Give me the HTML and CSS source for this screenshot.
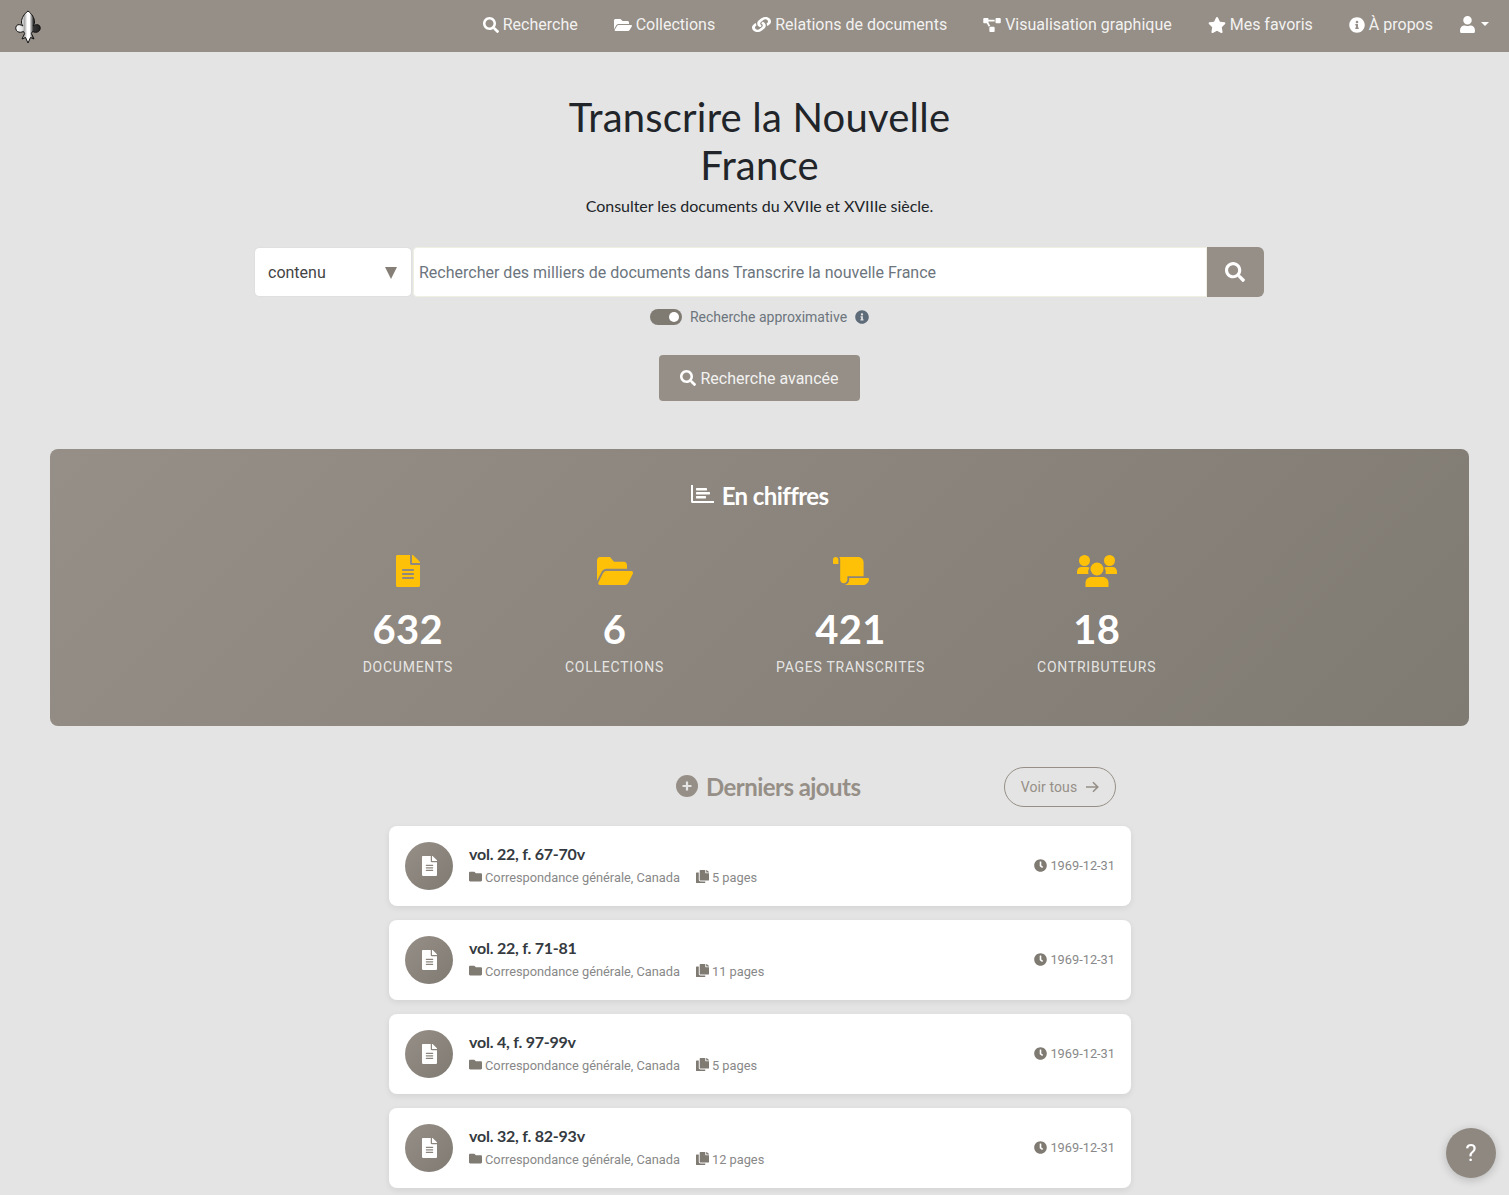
FILE: index.html
```html
<!DOCTYPE html>
<html lang="fr">
<head>
<meta charset="utf-8">
<title>Transcrire la Nouvelle France</title>
<link rel="stylesheet" href="styles.css">
</head>
<body>
<svg class="sprite" width="0" height="0" aria-hidden="true">
  <defs>
    <symbol id="i-search" viewBox="0 0 512 512"><path d="M505 442.7L405.3 343c-4.5-4.5-10.6-7-17-7H372c27.6-35.3 44-79.7 44-128C416 93.1 322.9 0 208 0S0 93.1 0 208s93.1 208 208 208c48.3 0 92.7-16.4 128-44v16.3c0 6.4 2.5 12.5 7 17l99.7 99.7c9.4 9.4 24.6 9.4 33.9 0l28.3-28.3c9.4-9.4 9.4-24.6.1-34zM208 336c-70.7 0-128-57.2-128-128 0-70.7 57.2-128 128-128 70.7 0 128 57.2 128 128 0 70.7-57.2 128-128 128z"/></symbol>
    <symbol id="i-folder-open" viewBox="0 0 576 512"><path d="M572.694 292.093L500.27 416.248A63.997 63.997 0 0 1 444.989 448H45.025c-18.523 0-30.064-20.093-20.731-36.093l72.424-124.155A64 64 0 0 1 152 256h399.964c18.523 0 30.064 20.093 20.73 36.093zM152 224h328v-48c0-26.51-21.49-48-48-48H272l-64-64H48C21.49 64 0 85.49 0 112v278.046l69.077-118.418C86.214 242.25 117.989 224 152 224z"/></symbol>
    <symbol id="i-folder-tall" viewBox="0 64 576 384" preserveAspectRatio="none"><path d="M572.694 292.093L500.27 416.248A63.997 63.997 0 0 1 444.989 448H45.025c-18.523 0-30.064-20.093-20.731-36.093l72.424-124.155A64 64 0 0 1 152 256h399.964c18.523 0 30.064 20.093 20.73 36.093zM152 224h328v-48c0-26.51-21.49-48-48-48H272l-64-64H48C21.49 64 0 85.49 0 112v278.046l69.077-118.418C86.214 242.25 117.989 224 152 224z"/></symbol>
    <symbol id="i-link" viewBox="0 0 512 512" preserveAspectRatio="none"><path d="M326.612 185.391c59.747 59.809 58.927 155.698.36 214.59-.11.12-.24.25-.36.37l-67.2 67.2c-59.27 59.27-155.699 59.262-214.96 0-59.27-59.26-59.27-155.7 0-214.96l37.106-37.106c9.84-9.84 26.786-3.3 27.294 10.606.648 17.722 3.826 35.527 9.69 52.721 1.986 5.822.567 12.262-3.783 16.612l-13.087 13.087c-28.026 28.026-28.905 73.66-1.155 101.96 28.024 28.579 74.086 28.749 102.325.51l67.2-67.19c28.191-28.191 28.073-73.757 0-101.83-3.701-3.694-7.429-6.564-10.341-8.569a16.037 16.037 0 0 1-6.947-12.606c-.396-10.567 3.348-21.456 11.698-29.806l21.054-21.055c5.521-5.521 14.182-6.199 20.584-1.731a152.482 152.482 0 0 1 20.522 17.197zM467.547 44.449c-59.261-59.262-155.69-59.27-214.96 0l-67.2 67.2c-.12.12-.25.25-.36.37-58.566 58.892-59.387 154.781.36 214.59a152.454 152.454 0 0 0 20.521 17.196c6.402 4.468 15.064 3.789 20.584-1.731l21.054-21.055c8.35-8.35 12.094-19.239 11.698-29.806a16.037 16.037 0 0 0-6.947-12.606c-2.912-2.005-6.64-4.875-10.341-8.569-28.073-28.073-28.191-73.639 0-101.83l67.2-67.19c28.239-28.239 74.3-28.069 102.325.51 27.75 28.3 26.872 73.934-1.155 101.96l-13.087 13.087c-4.35 4.35-5.769 10.79-3.783 16.612 5.864 17.194 9.042 34.999 9.69 52.721.509 13.906 17.454 20.446 27.294 10.606l37.106-37.106c59.271-59.259 59.271-155.699.001-214.959z"/></symbol>
    <symbol id="i-diagram" viewBox="0 0 640 512"><path d="M384 320H256c-17.67 0-32 14.33-32 32v128c0 17.67 14.33 32 32 32h128c17.67 0 32-14.33 32-32V352c0-17.67-14.33-32-32-32zM192 32c0-17.67-14.33-32-32-32H32C14.33 0 0 14.33 0 32v128c0 17.67 14.33 32 32 32h95.72l73.16 128.04C211.98 300.98 232.4 288 256 288h.28L192 175.51V128h224V64H192V32zM608 0H480c-17.67 0-32 14.33-32 32v128c0 17.67 14.33 32 32 32h128c17.67 0 32-14.33 32-32V32c0-17.67-14.33-32-32-32z"/></symbol>
    <symbol id="i-star" viewBox="0 0 576 512"><path d="M259.3 17.8L194 150.2 47.9 171.5c-26.2 3.8-36.7 36.1-17.7 54.6l105.7 103-25 145.5c-4.5 26.3 23.2 46 46.4 33.7L288 439.6l130.7 68.7c23.2 12.2 50.9-7.4 46.4-33.7l-25-145.5 105.7-103c19-18.5 8.5-50.8-17.7-54.6L382 150.2 316.7 17.8c-11.7-23.6-45.6-23.9-57.4 0z"/></symbol>
    <symbol id="i-info" viewBox="0 0 512 512"><path d="M256 8C119.043 8 8 119.083 8 256c0 136.997 111.043 248 248 248s248-111.003 248-248C504 119.083 392.957 8 256 8zm0 110c23.196 0 42 18.804 42 42s-18.804 42-42 42-42-18.804-42-42 18.804-42 42-42zm56 254c0 6.627-5.373 12-12 12h-88c-6.627 0-12-5.373-12-12v-24c0-6.627 5.373-12 12-12h12v-64h-12c-6.627 0-12-5.373-12-12v-24c0-6.627 5.373-12 12-12h64c6.627 0 12 5.373 12 12v100h12c6.627 0 12 5.373 12 12v24z"/></symbol>
    <symbol id="i-user" viewBox="0 0 448 512"><path d="M224 256c70.7 0 128-57.3 128-128S294.7 0 224 0 96 57.3 96 128s57.3 128 128 128zm89.6 32h-16.7c-22.2 10.2-46.9 16-72.9 16s-50.6-5.8-72.9-16h-16.7C60.2 288 0 348.2 0 422.4V464c0 26.5 21.5 48 48 48h352c26.5 0 48-21.5 48-48v-41.6c0-74.2-60.2-134.4-134.4-134.4z"/></symbol>
    <symbol id="i-file" viewBox="0 0 384 512"><path d="M224 136V0H24C10.7 0 0 10.7 0 24v464c0 13.3 10.7 24 24 24h336c13.3 0 24-10.7 24-24V160H248c-13.2 0-24-10.8-24-24zm64 236c0 6.6-5.4 12-12 12H108c-6.6 0-12-5.4-12-12v-8c0-6.6 5.4-12 12-12h168c6.6 0 12 5.4 12 12v8zm0-64c0 6.6-5.4 12-12 12H108c-6.6 0-12-5.4-12-12v-8c0-6.6 5.4-12 12-12h168c6.6 0 12 5.4 12 12v8zm0-72v8c0 6.6-5.4 12-12 12H108c-6.6 0-12-5.4-12-12v-8c0-6.6 5.4-12 12-12h168c6.6 0 12 5.4 12 12zm96-114.1v6.1H256V0h6.1c6.4 0 12.5 2.5 17 7l97.9 98c4.5 4.5 7 10.6 7 16.9z"/></symbol>
    <symbol id="i-scroll" viewBox="0 0 640 512" preserveAspectRatio="none"><path d="M48 0C21.53 0 0 21.53 0 48v64c0 8.84 7.16 16 16 16h80V48C96 21.53 74.47 0 48 0zm208 412.57V352h288V96c0-52.94-43.06-96-96-96H111.59C121.74 13.41 128 29.92 128 48v368c0 38.87 34.65 69.65 74.75 63.12C234.22 474 256 444.46 256 412.57zM288 384v32c0 52.93-43.06 96-96 96h336c61.86 0 112-50.14 112-112 0-8.84-7.16-16-16-16H288z"/></symbol>
    <symbol id="i-users" viewBox="0 0 40 32">
      <circle cx="7.5" cy="5.5" r="5.5"/><circle cx="32.5" cy="5.5" r="5.5"/><circle cx="20" cy="14" r="6.5"/>
      <path d="M0 19v-2.5C0 14 2 12 4.5 12H10c1 0 2 .3 2.7.8C11 14.5 11 17 11.5 19Z"/>
      <path d="M40 19v-2.5C40 14 38 12 35.500 12H30c-1 0-2 .3-2.700.8C29 14.500 29 17 28.500 19Z"/>
      <path d="M8.500 32v-4c0-3.500 2.500-6 6-6h11c3.500 0 6 2.500 6 6v4Z"/>
    </symbol>
    <symbol id="i-folder" viewBox="0 0 512 512"><path d="M464 128H272l-64-64H48C21.49 64 0 85.49 0 112v288c0 26.51 21.49 48 48 48h416c26.51 0 48-21.49 48-48V176c0-26.51-21.49-48-48-48z"/></symbol>
    <symbol id="i-copy" viewBox="0 0 448 512" preserveAspectRatio="none"><path d="M320 448v40c0 13.255-10.745 24-24 24H24c-13.255 0-24-10.745-24-24V120c0-13.255 10.745-24 24-24h72v296c0 30.879 25.121 56 56 56h168zm0-344V0H152c-13.255 0-24 10.745-24 24v368c0 13.255 10.745 24 24 24h272c13.255 0 24-10.745 24-24V128H344c-13.2 0-24-10.8-24-24zm120.971-31.029L375.029 7.029A24 24 0 0 0 358.059 0H352v96h96v-6.059a24 24 0 0 0-7.029-16.97z"/></symbol>
    <symbol id="i-clock" viewBox="0 0 512 512"><path d="M256,8C119,8,8,119,8,256S119,504,256,504,504,393,504,256,393,8,256,8Zm92.49,313h0l-20,25a16,16,0,0,1-22.49,2.5h0l-67-49.72a40,40,0,0,1-15-31.23V112a16,16,0,0,1,16-16h32a16,16,0,0,1,16,16V256l58,42.5A16,16,0,0,1,348.49,321Z"/></symbol>
    <linearGradient id="fleur-grad" x1="0" x2="1" y1="0" y2="0">
      <stop offset="0" stop-color="#fff"/>
      <stop offset="0.27" stop-color="#ddd"/>
      <stop offset="0.36" stop-color="#aaa"/>
      <stop offset="0.47" stop-color="#fff"/>
      <stop offset="0.56" stop-color="#fff"/>
      <stop offset="0.72" stop-color="#333"/>
      <stop offset="1" stop-color="#222"/>
    </linearGradient>
  </defs>
</svg>

<nav class="navbar">
  <a class="brand" href="#" aria-label="Accueil">
    <svg class="fleur" viewBox="0 0 26 34">
      <path d="M13 1C9 4 6.500 8 6.500 12 6.500 14 7.300 15 8 16 6 14.600 3 14 1.600 15.600 .2 17.400 .6 20.400 2.600 21.600 4.400 22.700 6.800 22.400 8.400 21.400L9.600 23.500 7 29 10.500 27.500 13 33 15.500 27.500 19 29 16.400 23.500 17.600 21.400C19.200 22.400 21.600 22.700 23.400 21.600 25.400 20.400 25.800 17.400 24.400 15.600 23 14 20 14.600 18 16 18.700 15 19.500 14 19.500 12 19.500 8 17 4 13 1Z" fill="url(#fleur-grad)" stroke="#111" stroke-width="1"/>
    </svg>
  </a>
  <ul class="nav-list">
    <li><a class="nav-link" href="#"><svg class="ico ico-search"><use href="#i-search"/></svg>Recherche</a></li>
    <li><a class="nav-link" href="#"><svg class="ico ico-open"><use href="#i-folder-open"/></svg>Collections</a></li>
    <li class="nav-rel"><a class="nav-link" href="#"><svg class="ico ico-link"><use href="#i-link"/></svg>Relations de documents</a></li>
    <li><a class="nav-link" href="#"><svg class="ico ico-diagram"><use href="#i-diagram"/></svg>Visualisation graphique</a></li>
    <li><a class="nav-link" href="#"><svg class="ico ico-star"><use href="#i-star"/></svg>Mes favoris</a></li>
    <li><a class="nav-link" href="#"><svg class="ico ico-info"><use href="#i-info"/></svg>À propos</a></li>
    <li><a class="nav-link nav-user" href="#" aria-label="Compte"><svg class="ico ico-user"><use href="#i-user"/></svg><span class="caret"></span></a></li>
  </ul>
</nav>

<main class="page">
  <section class="hero">
    <h1 class="hero-title">Transcrire la Nouvelle France</h1>
    <p class="hero-sub">Consulter les documents du XVIIe et XVIIIe siècle.</p>
    <form class="search-bar">
      <div class="select-box"><span>contenu</span><span class="select-arrow"></span></div>
      <div class="search-input">Rechercher des milliers de documents dans Transcrire la nouvelle France</div>
      <button class="search-btn" type="button" aria-label="Rechercher"><svg class="ico-search-lg"><use href="#i-search"/></svg></button>
    </form>
    <div class="toggle-row">
      <span class="toggle"><span class="toggle-knob"></span></span>
      <span class="toggle-label">Recherche approximative</span>
      <svg class="toggle-info"><use href="#i-info"/></svg>
    </div>
    <a class="adv-btn" href="#"><svg class="adv-ico"><use href="#i-search"/></svg>Recherche avancée</a>
  </section>

  <section class="stats">
    <h2 class="stats-title">
      <svg class="stats-chart" viewBox="0 0 23 18"><path d="M0 0h2v16h21v2H1.500A1.500 1.500 0 0 1 0 16.500Z"/><rect x="5" y="3" width="11" height="2.400" rx=".6"/><rect x="5" y="7" width="14" height="2.400" rx=".6"/><rect x="5" y="11" width="10" height="2.400" rx=".6"/></svg>
      En chiffres
    </h2>
    <div class="stats-row">
      <div class="stat"><svg class="stat-ico w-file"><use href="#i-file"/></svg><div class="stat-num">632</div><div class="stat-label">Documents</div></div>
      <div class="stat"><svg class="stat-ico w-open"><use href="#i-folder-tall"/></svg><div class="stat-num">6</div><div class="stat-label">Collections</div></div>
      <div class="stat"><svg class="stat-ico w-scroll"><use href="#i-scroll"/></svg><div class="stat-num">421</div><div class="stat-label">Pages transcrites</div></div>
      <div class="stat"><svg class="stat-ico w-users"><use href="#i-users"/></svg><div class="stat-num">18</div><div class="stat-label">Contributeurs</div></div>
    </div>
  </section>

  <section class="latest">
    <div class="latest-head">
      <h2 class="latest-title">
        <svg class="latest-ico" viewBox="0 0 22 22"><circle class="plus-disc" cx="11" cy="11" r="11"/><path class="plus-mark" d="M11 6.500v9M6.500 11h9"/></svg>
        Derniers ajouts
      </h2>
      <a class="see-all" href="#">Voir tous
        <svg class="see-arrow" viewBox="0 0 14 12"><path d="M1 6h11.500M8 1.200 12.800 6 8 10.800" fill="none" stroke="currentColor" stroke-width="1.600"/></svg>
      </a>
    </div>
    <div class="cards">
      <article class="card">
        <div class="card-circle"><svg class="card-file"><use href="#i-file"/></svg></div>
        <div class="card-body">
          <h3 class="card-title">vol. 22, f. 67-70v</h3>
          <div class="card-meta"><svg class="meta-ico"><use href="#i-folder"/></svg><span class="meta-col">Correspondance générale, Canada</span><svg class="meta-ico"><use href="#i-copy"/></svg><span>5 pages</span></div>
        </div>
        <div class="card-date"><svg class="date-ico"><use href="#i-clock"/></svg>1969-12-31</div>
      </article>
      <article class="card">
        <div class="card-circle"><svg class="card-file"><use href="#i-file"/></svg></div>
        <div class="card-body">
          <h3 class="card-title">vol. 22, f. 71-81</h3>
          <div class="card-meta"><svg class="meta-ico"><use href="#i-folder"/></svg><span class="meta-col">Correspondance générale, Canada</span><svg class="meta-ico"><use href="#i-copy"/></svg><span>11 pages</span></div>
        </div>
        <div class="card-date"><svg class="date-ico"><use href="#i-clock"/></svg>1969-12-31</div>
      </article>
      <article class="card">
        <div class="card-circle"><svg class="card-file"><use href="#i-file"/></svg></div>
        <div class="card-body">
          <h3 class="card-title">vol. 4, f. 97-99v</h3>
          <div class="card-meta"><svg class="meta-ico"><use href="#i-folder"/></svg><span class="meta-col">Correspondance générale, Canada</span><svg class="meta-ico"><use href="#i-copy"/></svg><span>5 pages</span></div>
        </div>
        <div class="card-date"><svg class="date-ico"><use href="#i-clock"/></svg>1969-12-31</div>
      </article>
      <article class="card">
        <div class="card-circle"><svg class="card-file"><use href="#i-file"/></svg></div>
        <div class="card-body">
          <h3 class="card-title">vol. 32, f. 82-93v</h3>
          <div class="card-meta"><svg class="meta-ico"><use href="#i-folder"/></svg><span class="meta-col">Correspondance générale, Canada</span><svg class="meta-ico"><use href="#i-copy"/></svg><span>12 pages</span></div>
        </div>
        <div class="card-date"><svg class="date-ico"><use href="#i-clock"/></svg>1969-12-31</div>
      </article>
    </div>
  </section>
</main>

<button class="help-btn" type="button" aria-label="Aide">?</button>
</body>
</html>
```

FILE: styles.css
```css
* { box-sizing: border-box; }
html, body { height: 1195px; overflow: hidden; }
body {
  margin: 0;
  background: #e4e4e4;
  color: #212529;
  font-family: Roboto, "Liberation Sans", sans-serif;
  font-size: 16px;
}
a { text-decoration: none; color: inherit; }
.sprite { position: absolute; }

/* Navbar */
.navbar {
  height: 52px;
  background: #968f87;
  display: flex;
  justify-content: space-between;
  padding: 0 20px 0 15px;
}
.brand { display: block; padding-top: 10px; }
.fleur { display: block; width: 26px; height: 34px; }
.nav-list {
  list-style: none;
  margin: 0;
  padding: 0;
  display: flex;
  gap: 36px;
}
.nav-rel { margin-left: 1px; }
.nav-link {
  display: flex;
  align-items: center;
  height: 49px;
  color: rgba(255, 255, 255, .9);
  line-height: 24px;
}
.ico { fill: #fff; height: 16px; margin-right: 4px; display: block; }
.ico-search { width: 16px; }
.ico-open { width: 18px; }
.ico-link { width: 19px; height: 15px; margin-right: 4px; }
.ico-diagram { width: 18px; height: 14px; }
.ico-star { width: 18px; }
.ico-info { width: 16px; }
.ico-user { width: 15px; height: 17px; margin-right: 6px; }
.nav-user { margin-left: -9px; }
.caret {
  width: 0; height: 0;
  border-left: 4px solid transparent;
  border-right: 4px solid transparent;
  border-top: 4px solid #fff;
  margin-bottom: 2px;
}

/* Page */
.page { padding: 0 40px 0 50px; }

.hero { display: flex; flex-direction: column; align-items: center; padding-top: 41px; }
.hero-title {
  width: 440px;
  margin: 0;
  font-family: Lato, sans-serif;
  font-weight: 400;
  font-size: 40px;
  line-height: 48px;
  letter-spacing: .2px;
  text-align: center;
}
.hero-sub {
  margin: 5px 0 0;
  font-family: Lato, sans-serif;
  font-size: 16px;
  line-height: 24px;
  letter-spacing: -.04px;
}

.search-bar { width: 1009px; display: flex; align-items: center; margin-top: 29px; }
.select-box {
  width: 156px;
  height: 48px;
  background: #fff;
  border-radius: 4px;
  box-shadow: 0 0 1px rgba(0,0,0,.2);
  display: flex;
  align-items: center;
  justify-content: space-between;
  padding: 0 14px 0 13px;
  color: #444;
  font-size: 16px;
}
.select-arrow {
  width: 0; height: 0;
  border-left: 6px solid transparent;
  border-right: 6px solid transparent;
  border-top: 12px solid #857f77;
  margin-top: 2px;
}
.search-input {
  width: 794px;
  height: 50px;
  margin-left: 2px;
  background: #fff;
  border: 1px solid #eff0e2;
  border-radius: 4px 0 0 4px;
  display: flex;
  align-items: center;
  padding: 0 5px;
  color: #6c757d;
  font-size: 16px;
}
.search-btn {
  width: 57px;
  height: 50px;
  border: 0;
  background: #968f87;
  border-radius: 0 6px 6px 0;
  display: flex;
  align-items: center;
  justify-content: center;
  padding: 0 2px 0 0;
}
.ico-search-lg { width: 20px; height: 20px; fill: #fff; }

.toggle-row {
  display: flex;
  align-items: center;
  margin-top: 8px;
  height: 24px;
  color: #6c757d;
  font-size: 14px;
}
.toggle {
  width: 32px;
  height: 16px;
  border-radius: 8px;
  background: #7f7a72;
  display: flex;
  align-items: center;
  justify-content: flex-end;
  padding-right: 3px;
  margin-right: 8px;
}
.toggle-knob { width: 10px; height: 10px; border-radius: 50%; background: #fff; }
.toggle-info { width: 14px; height: 14px; fill: #5e6b78; margin-left: 8px; }

.adv-btn {
  margin-top: 26px;
  width: 201px;
  height: 46px;
  border-radius: 4px;
  background: #968f87;
  color: rgba(255,255,255,.9);
  display: flex;
  align-items: center;
  justify-content: center;
  font-size: 16px;
}
.adv-ico { width: 16px; height: 16px; fill: #fff; margin-right: 4px; }

/* Stats */
.stats {
  margin-top: 48px;
  height: 277px;
  border-radius: 8px;
  background: linear-gradient(135deg, #968f87 0%, #7f7a72 100%);
  padding-top: 32px;
  color: #fff;
}
.stats-title {
  margin: 0;
  display: flex;
  align-items: center;
  justify-content: center;
  font-family: Lato, sans-serif;
  font-weight: 700;
  font-size: 24px;
  line-height: 29px;
  letter-spacing: -.6px;
}
.stats-chart { width: 23px; height: 18px; fill: #fff; margin-right: 8px; margin-bottom: 3px; }
.stats-row { display: flex; justify-content: center; gap: 112px; margin-top: 45px; }
.stat { display: flex; flex-direction: column; align-items: center; }
.stat-ico { height: 32px; fill: #ffc107; display: block; }
.w-file { width: 24px; }
.w-open { width: 36px; height: 28px; margin: 2px 0 2px 2px; }
.w-scroll { width: 36px; height: 28px; margin: 2px 0; }
.w-users { width: 40px; }
.stat-num {
  margin-top: 18px;
  font-family: Lato, sans-serif;
  font-weight: 700;
  font-size: 40px;
  line-height: 48px;
  letter-spacing: .3px;
}
.stat-label {
  margin-top: 4px;
  font-size: 14px;
  line-height: 21px;
  letter-spacing: .75px;
  text-transform: uppercase;
  color: rgba(255,255,255,.8);
}

/* Latest */
.latest { width: 742px; margin: 41px 0 0 339px; }
.latest-head {
  height: 40px;
  display: flex;
  align-items: center;
  justify-content: space-between;
  padding: 0 15px 0 287px;
}
.latest-title {
  margin: 0 0 2px;
  display: flex;
  align-items: center;
  font-family: Lato, sans-serif;
  font-weight: 700;
  font-size: 24px;
  letter-spacing: -.55px;
  color: #968f87;
}
.latest-ico { width: 22px; height: 22px; margin-right: 8px; }
.plus-disc { fill: #968f87; }
.plus-mark { fill: none; stroke: #e4e4e4; stroke-width: 2.200; }
.see-all {
  width: 112px;
  height: 40px;
  border: 1px solid #968f87;
  border-radius: 20px;
  display: flex;
  align-items: center;
  justify-content: center;
  gap: 8px;
  color: #968f87;
  font-size: 14px;
  letter-spacing: .1px;
}
.see-arrow { width: 14px; height: 12px; }

.cards { margin-top: 19px; display: flex; flex-direction: column; gap: 14px; }
.card {
  height: 80px;
  background: #fff;
  border-radius: 8px;
  box-shadow: 0 2px 6px rgba(0,0,0,.08);
  display: flex;
  align-items: center;
  padding: 0 16px;
}
.card-circle {
  width: 48px;
  height: 48px;
  border-radius: 50%;
  background: linear-gradient(135deg, #968f87, #7f7a72);
  display: flex;
  align-items: center;
  justify-content: center;
  margin-right: 16px;
  flex: none;
}
.card-file { width: 15px; height: 20px; fill: #fff; }
.card-body { flex: 1; padding-bottom: 2px; }
.card-title {
  margin: 0;
  font-family: Lato, sans-serif;
  font-weight: 700;
  font-size: 16px;
  line-height: 19px;
  letter-spacing: -.22px;
  color: #343a40;
}
.card-meta {
  margin-top: 5px;
  display: flex;
  align-items: center;
  font-size: 12.8px;
  line-height: 19px;
  color: #888;
}
.meta-ico { width: 13px; height: 13px; fill: #7f7a72; margin-right: 3px; margin-bottom: 2px; }
.meta-col { margin-right: 16px; }
.card-date {
  display: flex;
  align-items: center;
  font-size: 12.8px;
  color: #888;
  padding-bottom: 2px;
}
.date-ico { width: 13px; height: 13px; fill: #7f7a72; margin-right: 3px; }

.help-btn {
  position: fixed;
  left: 1446px;
  top: 1128px;
  width: 50px;
  height: 50px;
  border: 0;
  border-radius: 50%;
  background: #8f8880;
  box-shadow: 0 2px 10px rgba(0,0,0,.2);
  color: #fff;
  font-family: Roboto, sans-serif;
  font-size: 24px;
  padding: 0;
}
```
